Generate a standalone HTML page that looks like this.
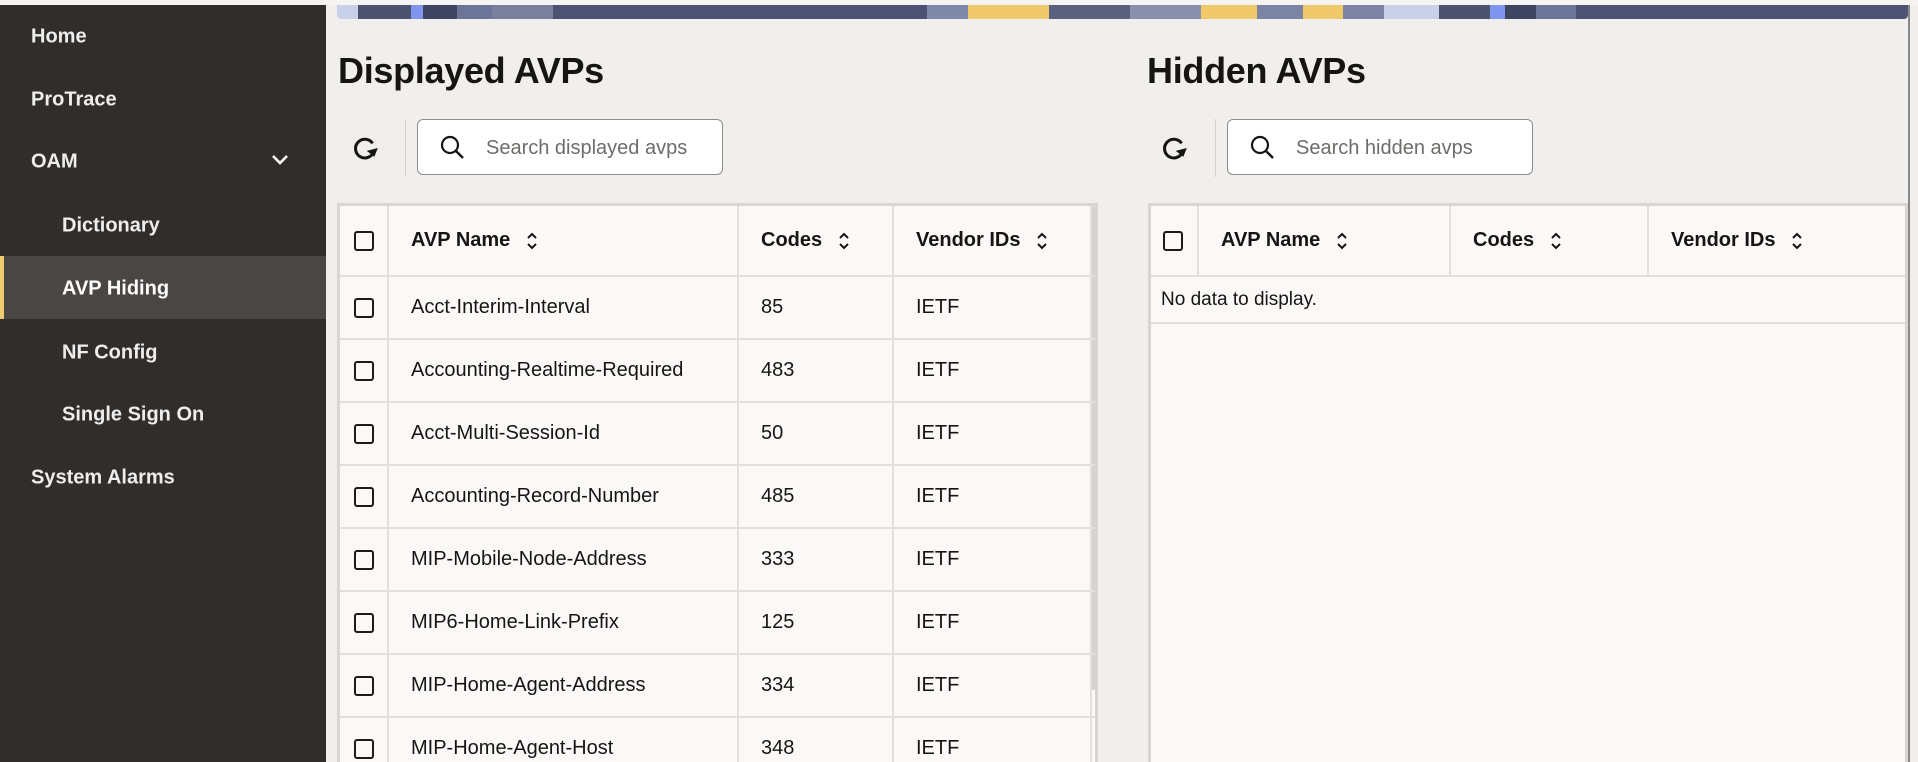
<!DOCTYPE html>
<html style="overflow:hidden;width:1918px;height:762px"><head><meta charset="utf-8"><style>
*{box-sizing:border-box;margin:0;padding:0}
body{width:1918px;height:762px;overflow:hidden;background:#f1efed;font-family:"Liberation Sans",Arial,sans-serif;position:relative;color:#161513}
.topstrip{position:absolute;left:0;top:0;width:1918px;height:5px;background:#f5f4f2}
.side{position:absolute;left:0;top:5px;width:326px;height:757px;background:#312d2a}
.nav{position:absolute;left:31px;color:#fff;font-size:20px;font-weight:bold;transform:translateY(-50%);opacity:.92;margin-top:2px}
.sub{left:62px}
.sel{position:absolute;left:0;top:251px;width:326px;height:63px;background:#4a4643;border-left:4px solid #f0cc71}
.banner{position:absolute;left:337px;top:5px;width:1571px;height:14px;border-radius:0 0 4px 4px;
background:linear-gradient(90deg,#c8d0ea 0,#c8d0ea 21px,#4a5270 21px,#4a5270 74px,#7f95f0 74px,#7f95f0 86px,#3e4562 86px,#3e4562 120px,#6c7597 120px,#6c7597 155px,#7a809c 155px,#7a809c 216px,#4b5272 216px,#4b5272 590px,#8088a8 590px,#8088a8 631px,#f0c96a 631px,#f0c96a 712px,#5a607e 712px,#5a607e 793px,#8a90ac 793px,#8a90ac 864px,#f0c96a 864px,#f0c96a 920px,#7c84a3 920px,#7c84a3 966px,#f0c96a 966px,#f0c96a 1006px,#7d84a3 1006px,#7d84a3 1047px,#c8d0ea 1047px,#c8d0ea 1102px,#4a5270 1102px,#4a5270 1153px,#7f95f0 1153px,#7f95f0 1168px,#3e4562 1168px,#3e4562 1199px,#6c7597 1199px,#6c7597 1239px,#4b5272 1239px)}
.vscroll{position:absolute;left:1908px;top:5px;width:10px;height:757px;background:#f1efed;border-left:2px solid #8a8a8a}
h1{position:absolute;font-size:36px;font-weight:bold;top:50px;letter-spacing:-0.3px}
.refresh{position:absolute;top:134px;width:28px;height:28px}
.divider{position:absolute;top:119px;width:1px;height:58px;background:#d6d2ce}
.search{position:absolute;top:119px;width:306px;height:56px;background:#fff;border:1px solid #8f8b87;border-radius:6px}
.search svg{position:absolute;left:22px;top:15px}
.search span{position:absolute;left:68px;top:17px;font-size:20px;color:#6f6c69}
.tbl{position:absolute;top:203px;height:559px;overflow:hidden;background:#fbf9f8;border:3px solid #d9d5d3;border-bottom:none}
.row{position:absolute;left:0;right:0;border-bottom:2px solid #e2dfdc}
.cell{position:absolute;top:0;height:100%;display:flex;align-items:center;font-size:20px;border-right:2px solid #e2dfdc}
.cb{width:20px;height:20px;border:2px solid #1d1b19;border-radius:3px;margin-left:14px}
.hd{font-weight:bold}
.sort{margin-left:16px}
</style></head><body>
<div class="topstrip"></div>
<div class="side">
<div class="sel"></div>
</div>
<div class="nav" style="top:35px">Home</div>
<div class="nav" style="top:98px">ProTrace</div>
<div class="nav" style="top:160px">OAM</div>
<svg style="position:absolute;left:271px;top:154px" width="18" height="12" viewBox="0 0 18 12"><path d="M2 2l7 7 7-7" stroke="#fff" stroke-width="2.6" fill="none"/></svg>
<div class="nav sub" style="top:224px">Dictionary</div>
<div class="nav sub" style="top:287px;opacity:1">AVP Hiding</div>
<div class="nav sub" style="top:351px">NF Config</div>
<div class="nav sub" style="top:413px">Single Sign On</div>
<div class="nav" style="top:476px">System Alarms</div>

<div class="banner"></div>
<div class="vscroll"></div>

<h1 style="left:338px">Displayed AVPs</h1>
<h1 style="left:1147px">Hidden AVPs</h1>

<svg class="refresh" style="left:351px" viewBox="0 0 24 24"><path d="M18.5 8A8 8 0 1 0 19.5 15" stroke="#161513" stroke-width="2.6" fill="none"/><path d="M13.5 14.5l6.5 5 3-7.5z" fill="#161513"/></svg>
<svg class="refresh" style="left:1160px" viewBox="0 0 24 24"><path d="M18.5 8A8 8 0 1 0 19.5 15" stroke="#161513" stroke-width="2.6" fill="none"/><path d="M13.5 14.5l6.5 5 3-7.5z" fill="#161513"/></svg>
<div class="divider" style="left:405px"></div>
<div class="divider" style="left:1215px"></div>
<div class="search" style="left:417px"><svg width="26" height="26" viewBox="0 0 26 26"><circle cx="10" cy="10" r="8" stroke="#161513" stroke-width="2.2" fill="none"/><path d="M16 16l7 7" stroke="#161513" stroke-width="2.4"/></svg><span>Search displayed avps</span></div>
<div class="search" style="left:1227px"><svg width="26" height="26" viewBox="0 0 26 26"><circle cx="10" cy="10" r="8" stroke="#161513" stroke-width="2.2" fill="none"/><path d="M16 16l7 7" stroke="#161513" stroke-width="2.4"/></svg><span>Search hidden avps</span></div>

<!-- Displayed table -->
<div class="tbl" style="left:337px;width:761px">
<div style="position:absolute;left:751px;top:0;width:4px;height:484px;background:#d6d3d0;border-radius:2px"></div>
<div class="row" style="top:0;height:71px">
 <div class="cell" style="left:0;width:49px"><div class="cb"></div></div>
 <div class="cell hd" style="left:49px;width:350px;padding-left:22px">AVP Name<svg class="sort" width="12" height="20" viewBox="0 0 12 20"><path d="M2 7l4-4 4 4M2 13l4 4 4-4" stroke="#161513" stroke-width="2" fill="none"/></svg></div>
 <div class="cell hd" style="left:399px;width:155px;padding-left:22px">Codes<svg class="sort" width="12" height="20" viewBox="0 0 12 20"><path d="M2 7l4-4 4 4M2 13l4 4 4-4" stroke="#161513" stroke-width="2" fill="none"/></svg></div>
 <div class="cell hd" style="left:554px;width:198px;padding-left:22px">Vendor IDs<svg class="sort" width="12" height="20" viewBox="0 0 12 20"><path d="M2 7l4-4 4 4M2 13l4 4 4-4" stroke="#161513" stroke-width="2" fill="none"/></svg></div>
</div>
<div class="row" style="top:71px;height:63px"><div class="cell" style="left:0;width:49px"><div class="cb"></div></div><div class="cell" style="left:49px;width:350px;padding-left:22px">Acct-Interim-Interval</div><div class="cell" style="left:399px;width:155px;padding-left:22px">85</div><div class="cell" style="left:554px;width:198px;padding-left:22px">IETF</div></div>
<div class="row" style="top:134px;height:63px"><div class="cell" style="left:0;width:49px"><div class="cb"></div></div><div class="cell" style="left:49px;width:350px;padding-left:22px">Accounting-Realtime-Required</div><div class="cell" style="left:399px;width:155px;padding-left:22px">483</div><div class="cell" style="left:554px;width:198px;padding-left:22px">IETF</div></div>
<div class="row" style="top:197px;height:63px"><div class="cell" style="left:0;width:49px"><div class="cb"></div></div><div class="cell" style="left:49px;width:350px;padding-left:22px">Acct-Multi-Session-Id</div><div class="cell" style="left:399px;width:155px;padding-left:22px">50</div><div class="cell" style="left:554px;width:198px;padding-left:22px">IETF</div></div>
<div class="row" style="top:260px;height:63px"><div class="cell" style="left:0;width:49px"><div class="cb"></div></div><div class="cell" style="left:49px;width:350px;padding-left:22px">Accounting-Record-Number</div><div class="cell" style="left:399px;width:155px;padding-left:22px">485</div><div class="cell" style="left:554px;width:198px;padding-left:22px">IETF</div></div>
<div class="row" style="top:323px;height:63px"><div class="cell" style="left:0;width:49px"><div class="cb"></div></div><div class="cell" style="left:49px;width:350px;padding-left:22px">MIP-Mobile-Node-Address</div><div class="cell" style="left:399px;width:155px;padding-left:22px">333</div><div class="cell" style="left:554px;width:198px;padding-left:22px">IETF</div></div>
<div class="row" style="top:386px;height:63px"><div class="cell" style="left:0;width:49px"><div class="cb"></div></div><div class="cell" style="left:49px;width:350px;padding-left:22px">MIP6-Home-Link-Prefix</div><div class="cell" style="left:399px;width:155px;padding-left:22px">125</div><div class="cell" style="left:554px;width:198px;padding-left:22px">IETF</div></div>
<div class="row" style="top:449px;height:63px"><div class="cell" style="left:0;width:49px"><div class="cb"></div></div><div class="cell" style="left:49px;width:350px;padding-left:22px">MIP-Home-Agent-Address</div><div class="cell" style="left:399px;width:155px;padding-left:22px">334</div><div class="cell" style="left:554px;width:198px;padding-left:22px">IETF</div></div>
<div class="row" style="top:512px;height:63px"><div class="cell" style="left:0;width:49px"><div class="cb"></div></div><div class="cell" style="left:49px;width:350px;padding-left:22px">MIP-Home-Agent-Host</div><div class="cell" style="left:399px;width:155px;padding-left:22px">348</div><div class="cell" style="left:554px;width:198px;padding-left:22px">IETF</div></div>
</div>

<!-- Hidden table -->
<div class="tbl" style="left:1148px;width:760px">
<div class="row" style="top:0;height:71px">
 <div class="cell" style="left:0;width:48px"><div class="cb" style="margin-left:12px"></div></div>
 <div class="cell hd" style="left:48px;width:252px;padding-left:22px">AVP Name<svg class="sort" width="12" height="20" viewBox="0 0 12 20"><path d="M2 7l4-4 4 4M2 13l4 4 4-4" stroke="#161513" stroke-width="2" fill="none"/></svg></div>
 <div class="cell hd" style="left:300px;width:198px;padding-left:22px">Codes<svg class="sort" width="12" height="20" viewBox="0 0 12 20"><path d="M2 7l4-4 4 4M2 13l4 4 4-4" stroke="#161513" stroke-width="2" fill="none"/></svg></div>
 <div class="cell hd" style="left:498px;width:256px;padding-left:22px;border-right:none">Vendor IDs<svg class="sort" width="12" height="20" viewBox="0 0 12 20"><path d="M2 7l4-4 4 4M2 13l4 4 4-4" stroke="#161513" stroke-width="2" fill="none"/></svg></div>
</div>
<div class="row" style="top:71px;height:47px"><div style="position:absolute;left:10px;top:0;height:45px;display:flex;align-items:center;font-size:19px">No data to display.</div></div>
</div>
</body></html>
